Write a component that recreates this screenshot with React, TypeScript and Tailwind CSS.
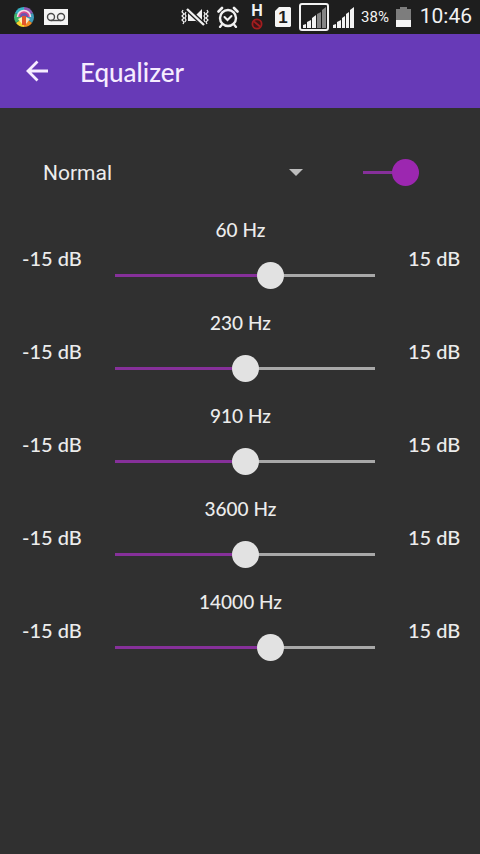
import { useState } from "react";

const BANDS = [
  { label: "60 Hz", gain: 3 },
  { label: "230 Hz", gain: 0 },
  { label: "910 Hz", gain: 0 },
  { label: "3600 Hz", gain: 0 },
  { label: "14000 Hz", gain: 3 },
];

const PRESETS = ["Normal", "Classical", "Dance", "Flat", "Folk", "Heavy Metal", "Hip Hop", "Jazz", "Pop", "Rock"];

function SignalIcon() {
  return (
    <svg viewBox="0 0 21 21" className="h-[21px] w-[21px]" fill="#f2f2f2">
      <path d="M0 21v-3l3-1v4zM4 21v-6l4-2v8zM9 21V11l3-2v12zM13 21V7l3-2v16zM17 21V3l4-3v21z" />
    </svg>
  );
}

function StatusBar() {
  return (
    <div className="flex h-[34px] items-center justify-between bg-[#1e1e1e] pl-3.5 pr-2 text-[#f2f2f2]">
      <div className="flex items-center gap-2.5">
        <svg viewBox="0 0 20 20" className="h-5 w-5">
          <path d="M10 10L10 0A10 10 0 0 1 19 6z" fill="#8e5bb5" />
          <path d="M10 10L19 6A10 10 0 0 1 18 16z" fill="#3f9ab8" />
          <path d="M10 10L18 16A10 10 0 0 1 10 20z" fill="#f08a24" />
          <path d="M10 10L10 20A10 10 0 0 1 2 16z" fill="#f5d32c" />
          <path d="M10 10L2 16A10 10 0 0 1 1 6z" fill="#3fb56b" />
          <path d="M10 10L1 6A10 10 0 0 1 10 0z" fill="#37b3c4" />
          <path d="M3.500 10a6.500 6.500 0 0 1 13 0" fill="#d9488f" stroke="#f4dfe9" strokeWidth="1.500" />
          <path d="M6 10a4 4 0 0 1 8 0z" fill="#6d55ae" />
          <path d="M4 12l4-2v7z" fill="#fff3b0" />
          <path d="M16 12l-4-2v7z" fill="#f6e6c4" />
          <path d="M8 9h4v9H8z" fill="#e2562c" />
        </svg>
        <svg viewBox="0 0 24 16" className="h-4 w-6">
          <path d="M0 0h24v16H0z" fill="#f5f5f5" />
          <g fill="none" stroke="#4a4a4a" strokeWidth="1.400">
            <circle cx="7" cy="8" r="3.500" />
            <circle cx="17" cy="8" r="3.500" />
            <path d="M7 11.500h10" />
          </g>
        </svg>
      </div>
      <div className="flex items-center gap-2">
        <svg viewBox="0 0 28 20" className="h-5 w-7" fill="none" stroke="#f2f2f2">
          <path d="M2 3l-1 2 2 2-2 2 2 2-2 2 2 2-1 2M5 5l-1 2 1 2-1 2 1 2-1 2M26 3l1 2-2 2 2 2-2 2 2 2-2 2 1 2M23 5l1 2-1 2 1 2-1 2 1 2" strokeWidth="1.200" />
          <path d="M7 5h4l3 4 7-7v16l-6-4H7z" fill="#f2f2f2" stroke="none" />
          <path d="M6 2l17 16" stroke="#1e1e1e" strokeWidth="5" />
          <path d="M6 2l17 16" strokeWidth="2.400" />
        </svg>
        <svg viewBox="0 0 22 22" className="h-[22px] w-[22px]" fill="none" stroke="#f2f2f2" strokeLinecap="round">
          <circle cx="11" cy="12" r="8" strokeWidth="2.400" />
          <path d="M7.500 11l3 3 4-4" strokeWidth="2" />
          <path d="M1.500 5.500L5 2M20.500 5.500L17 2" strokeWidth="2.600" />
          <path d="M5 18.500L3 21M17 18.500l2 2.500" strokeWidth="2.200" />
        </svg>
        <div className="flex w-5 flex-col items-center">
          <span className="font-['Liberation_Sans',sans-serif] text-base/[14px] font-bold">H</span>
          <svg viewBox="0 0 12 12" className="h-3 w-3" fill="none" stroke="#a31d1f" strokeWidth="1.800">
            <circle cx="6" cy="6" r="4.600" fill="#3c1416" />
            <path d="M3 3.500l6 5" />
          </svg>
        </div>
        <svg viewBox="0 0 16 20" className="h-5 w-4">
          <path d="M4 0h11l1 1v18l-1 1H1l-1-1V4z" fill="#f5f5f5" />
          <text x="8" y="16" textAnchor="middle" fill="#1e1e1e" className="font-['Liberation_Sans',sans-serif] text-[17px] font-bold">
            1
          </text>
        </svg>
        <div className="flex items-center gap-1">
          <svg viewBox="0 0 30 28" className="h-7 w-[30px]">
            <rect x="1" y="1" width="28" height="26" rx="2" fill="none" stroke="#f2f2f2" strokeWidth="2" />
            <path d="M4 25v-3l3-1v4zM8 25v-6l4-2v8zM13 25V15l4-3v13z" fill="#f2f2f2" />
            <path d="M18 25V11l4-2v16zM23 25V7l4-3v21z" fill="#858585" />
          </svg>
          <SignalIcon />
        </div>
        <span className="flex w-[26px] justify-center font-['Roboto',sans-serif] text-[15px]">38%</span>
        <svg viewBox="0 0 15 20" className="h-5 w-[15px]">
          <path d="M4 0h7v2h4v18H0V2h4z" fill="#7d7d7d" />
          <path d="M0 13h15v7H0z" fill="#f5f5f5" />
        </svg>
        <span className="flex w-[53px] justify-end font-['Roboto',sans-serif] text-[21px]">10:46</span>
      </div>
    </div>
  );
}

function Band({ label, initial }: { label: string; initial: number }) {
  const [gain, setGain] = useState(initial);

  return (
    <div className="h-[93px] pl-[22px] pr-[21px] font-medium">
      <div className="text-center text-[19px]/6">{label}</div>
      <div className="mt-1 flex items-start">
        <span className="w-[62px] text-xl/6 whitespace-nowrap">-15 dB</span>
        <div className="grid flex-1 items-center pt-4 pl-[18px] pr-5">
          <span className="col-start-1 row-start-1 mx-[13px] h-[3px] bg-[#a8a8a8]">
            <span className="block h-full bg-[#86309a]" style={{ width: `${((gain + 15) / 30) * 100}%` }} />
          </span>
          <input
            type="range"
            aria-label={label}
            min={-15}
            max={15}
            value={gain}
            onChange={(e) => setGain(Number(e.target.value))}
            className="col-start-1 row-start-1 h-[27px] w-full cursor-pointer appearance-none bg-transparent [&::-webkit-slider-thumb]:h-[27px] [&::-webkit-slider-thumb]:w-[27px] [&::-webkit-slider-thumb]:appearance-none [&::-webkit-slider-thumb]:rounded-full [&::-webkit-slider-thumb]:bg-[#e2e2e2]"
          />
        </div>
        <span className="w-[51px] text-right text-xl/6 whitespace-nowrap">15 dB</span>
      </div>
    </div>
  );
}

export default function App() {
  const [enabled, setEnabled] = useState(true);
  const [preset, setPreset] = useState("Normal");

  return (
    <div className="min-h-screen bg-[#303030] font-['Lato',sans-serif] text-[#ececec]">
      <StatusBar />
      <header className="flex h-[74px] items-center gap-8 bg-[#673ab7] pl-[26px] text-[#f6ecff]">
        <button type="button" aria-label="Back" className="cursor-pointer">
          <svg viewBox="0 0 22 22" className="h-[22px] w-[22px]" fill="none" stroke="currentColor" strokeWidth="2.800">
            <path d="M11.500 1.500L2 11l9.500 9.500M2 11h20" />
          </svg>
        </button>
        <h1 className="pt-0.5 text-[26px] font-medium">Equalizer</h1>
      </header>

      <main className="pt-11">
        <div className="flex items-center justify-between pl-[43px] pr-[61px]">
          <div className="grid w-[260px] items-center">
            <select
              aria-label="Preset"
              value={preset}
              onChange={(e) => setPreset(e.target.value)}
              className="col-start-1 row-start-1 h-10 w-full cursor-pointer appearance-none bg-transparent pt-1 font-['Roboto',sans-serif] text-[21px]"
            >
              {PRESETS.map((name) => (
                <option key={name} value={name} className="bg-[#424242]">
                  {name}
                </option>
              ))}
            </select>
            <svg viewBox="0 0 14 7" className="pointer-events-none col-start-1 row-start-1 h-[7px] w-3.5 justify-self-end" fill="#bdbdbd">
              <path d="M0 0h14L7 7z" />
            </svg>
          </div>
          <label className="grid w-14 cursor-pointer items-center">
            <input
              type="checkbox"
              role="switch"
              aria-label="Enable equalizer"
              checked={enabled}
              onChange={(e) => setEnabled(e.target.checked)}
              className="peer col-start-1 row-start-1 h-[27px] w-full cursor-pointer appearance-none"
            />
            <span className="col-start-1 row-start-1 h-[3px] bg-[#a8a8a8] peer-checked:bg-[#86309a]" />
            <span className="col-start-1 row-start-1 h-[27px] w-[27px] rounded-full bg-[#e2e2e2] peer-checked:justify-self-end peer-checked:bg-[#9c27b0]" />
          </label>
        </div>

        <div className="mt-[26px]">
          {BANDS.map((band) => (
            <Band key={band.label} label={band.label} initial={band.gain} />
          ))}
        </div>
      </main>
    </div>
  );
}
